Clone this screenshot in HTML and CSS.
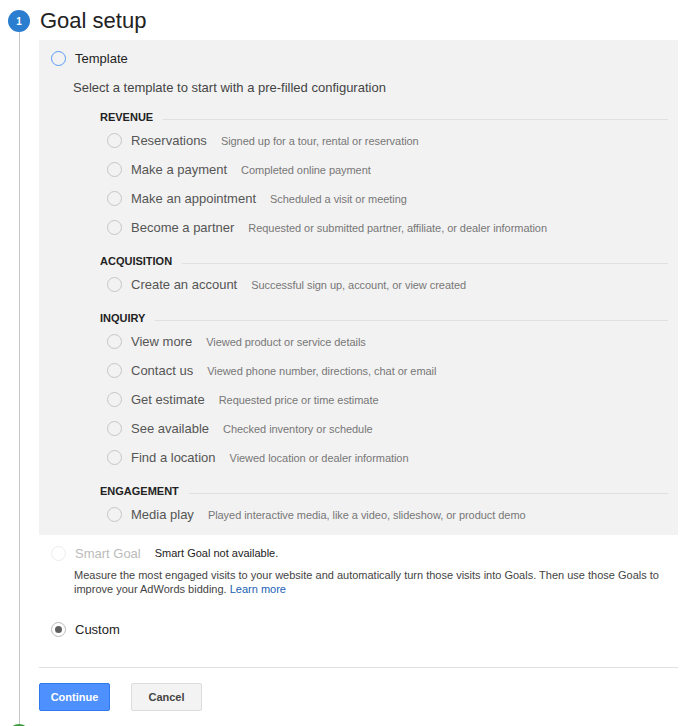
FILE: index.html
```html
<!DOCTYPE html>
<html>
<head>
<meta charset="utf-8">
<link rel="stylesheet" href="styles.css">
</head>
<body>
<div class="step">
  <div class="gutter">
    <div class="num">1</div>
    <div class="vline"></div>
  </div>
  <div class="content">
    <div class="title">Goal setup</div>
    <div class="panel">
      <div class="opt-row top">
        <span class="radio active"></span><span class="opt-label">Template</span>
      </div>
      <div class="hint">Select a template to start with a pre-filled configuration</div>
      <div class="groups">
        <div class="group">
          <div class="ghead"><span>REVENUE</span><span class="gline"></span></div>
          <div class="row"><span class="radio"></span><span class="rlabel">Reservations</span><span class="rdesc">Signed up for a tour, rental or reservation</span></div>
          <div class="row"><span class="radio"></span><span class="rlabel">Make a payment</span><span class="rdesc">Completed online payment</span></div>
          <div class="row"><span class="radio"></span><span class="rlabel">Make an appointment</span><span class="rdesc">Scheduled a visit or meeting</span></div>
          <div class="row"><span class="radio"></span><span class="rlabel">Become a partner</span><span class="rdesc">Requested or submitted partner, affiliate, or dealer information</span></div>
        </div>
        <div class="group">
          <div class="ghead"><span>ACQUISITION</span><span class="gline"></span></div>
          <div class="row"><span class="radio"></span><span class="rlabel">Create an account</span><span class="rdesc">Successful sign up, account, or view created</span></div>
        </div>
        <div class="group">
          <div class="ghead"><span>INQUIRY</span><span class="gline"></span></div>
          <div class="row"><span class="radio"></span><span class="rlabel">View more</span><span class="rdesc">Viewed product or service details</span></div>
          <div class="row"><span class="radio"></span><span class="rlabel">Contact us</span><span class="rdesc">Viewed phone number, directions, chat or email</span></div>
          <div class="row"><span class="radio"></span><span class="rlabel">Get estimate</span><span class="rdesc">Requested price or time estimate</span></div>
          <div class="row"><span class="radio"></span><span class="rlabel">See available</span><span class="rdesc">Checked inventory or schedule</span></div>
          <div class="row"><span class="radio"></span><span class="rlabel">Find a location</span><span class="rdesc">Viewed location or dealer information</span></div>
        </div>
        <div class="group">
          <div class="ghead"><span>ENGAGEMENT</span><span class="gline"></span></div>
          <div class="row"><span class="radio"></span><span class="rlabel">Media play</span><span class="rdesc">Played interactive media, like a video, slideshow, or product demo</span></div>
        </div>
      </div>
    </div>
    <div class="opt-row smart">
      <span class="radio disabled"></span><span class="opt-label muted">Smart Goal</span><span class="na">Smart Goal not available.</span>
    </div>
    <div class="smart-desc">Measure the most engaged visits to your website and automatically turn those visits into Goals. Then use those Goals to improve your AdWords bidding. <a class="link" href="#">Learn more</a></div>
    <div class="opt-row custom">
      <span class="radio checked"></span><span class="opt-label">Custom</span>
    </div>
    <div class="sep"></div>
    <div class="actions">
      <button class="btn primary">Continue</button>
      <button class="btn">Cancel</button>
    </div>
  </div>
</div>
<div class="next">
  <div class="next-num"></div>
</div>
</body>
</html>
```

FILE: styles.css
```css
* { box-sizing: border-box; }
html, body { margin: 0; padding: 0; background: #fff; }
body {
  font-family: Arial, "Liberation Sans", sans-serif;
  color: #222;
  width: 688px;
  height: 726px;
  overflow: hidden;
}
.step {
  display: flex;
  height: 724px;
}
.gutter {
  width: 39px;
  flex: none;
  display: flex;
  flex-direction: column;
  align-items: flex-start;
}
.num {
  width: 22px;
  height: 22px;
  margin: 10px 0 0 8px;
  border-radius: 50%;
  background: #2b7dd0;
  color: #fff;
  font-size: 10px;
  font-weight: bold;
  display: flex;
  align-items: center;
  justify-content: center;
}
.vline {
  flex: 1;
  width: 1px;
  margin-left: 19px;
  background: #c8c8c8;
}
.content {
  width: 639px;
  display: flex;
  flex-direction: column;
}
.title {
  height: 40px;
  line-height: 42px;
  font-size: 22px;
  color: #222;
  padding-left: 1px;
}
.panel {
  background: #f2f2f2;
  padding: 0 10px 6px 12px;
}
.opt-row {
  display: flex;
  align-items: center;
  font-size: 13px;
}
.opt-row.top { height: 37px; }
.radio {
  width: 15px;
  height: 15px;
  border-radius: 50%;
  border: 1px solid #c6c6c6;
  flex: none;
  display: flex;
  align-items: center;
  justify-content: center;
}
.radio.active { border-color: #5a9bf6; }
.radio.disabled { border-color: #ececec; }
.radio.checked { border-color: #b9b9b9; }
.radio.checked::after {
  content: "";
  width: 7px;
  height: 7px;
  border-radius: 50%;
  background: #5f5f5f;
}
.opt-label {
  margin-left: 9px;
  color: #222;
}
.opt-label.muted { color: #bbb; }
.hint {
  height: 21px;
  line-height: 21px;
  font-size: 13px;
  color: #444;
  padding-left: 22px;
}
.groups { padding-left: 49px; }
.group { margin-top: 10px; }
.ghead {
  height: 18px;
  display: flex;
  align-items: center;
  font-size: 11px;
  font-weight: bold;
  color: #222;
}
.gline {
  flex: 1;
  height: 1px;
  background: #e0e0e0;
  margin: 4px 0 0 10px;
}
.row {
  height: 29px;
  display: flex;
  align-items: center;
  padding-left: 7px;
}
.rlabel {
  margin-left: 9px;
  font-size: 13px;
  color: #555;
}
.rdesc {
  margin-left: 14px;
  font-size: 11px;
  color: #777;
  letter-spacing: -0.05px;
}
.opt-row.smart {
  height: 20px;
  margin-top: 8px;
  padding-left: 12px;
}
.na {
  margin-left: 14px;
  font-size: 11px;
  color: #222;
}
.smart-desc {
  margin-top: 5px;
  padding-left: 35px;
  padding-right: 10px;
  font-size: 11px;
  line-height: 14px;
  color: #444;
}
.link { color: #1a5fb4; text-decoration: none; }
.opt-row.custom {
  height: 20px;
  margin-top: 23px;
  padding-left: 12px;
}
.sep {
  height: 1px;
  background: #e0e0e0;
  margin-top: 28px;
}
.actions {
  display: flex;
  gap: 21px;
  margin-top: 15px;
}
.btn {
  width: 71px;
  height: 28px;
  font-family: Arial, "Liberation Sans", sans-serif;
  font-size: 11px;
  font-weight: bold;
  border-radius: 2px;
  border: 1px solid #dcdcdc;
  background: #f3f3f3;
  color: #444;
  padding: 0;
}
.btn.primary {
  background: #4d90fe;
  border-color: #3079ed;
  color: #fff;
}
.next {
  height: 2px;
  overflow: hidden;
}
.next-num {
  width: 22px;
  height: 22px;
  margin-left: 8px;
  border-radius: 50%;
  background: #3b9b3b;
}
```
